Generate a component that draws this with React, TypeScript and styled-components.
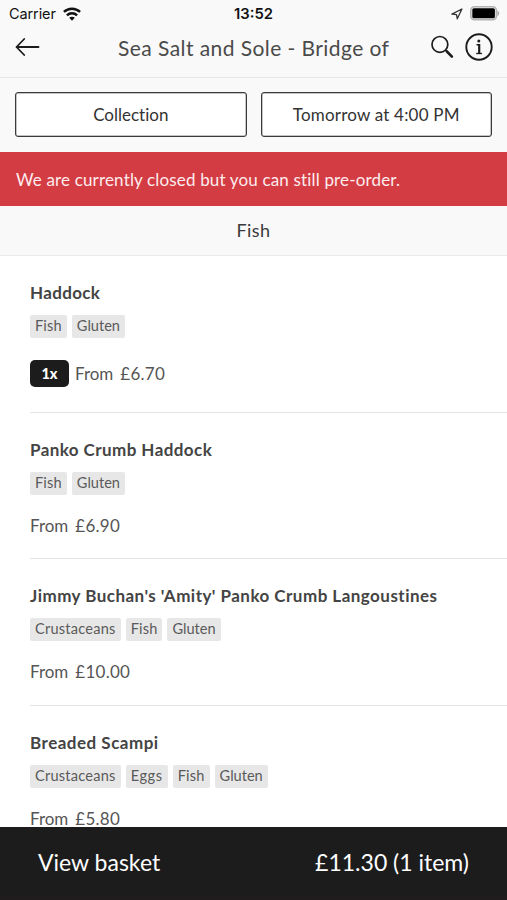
import React from "react";
import styled, { createGlobalStyle } from "styled-components";

const Global = createGlobalStyle`
  * { box-sizing: border-box; }
  body { margin: 0; background: #fff; }
`;

const Screen = styled.div`
  width: 100%;
  height: 900px;
  display: flex;
  flex-direction: column;
  overflow: hidden;
  background: #fff;
  color: #4a4a4a;
  font-family: Lato, "Open Sans", sans-serif;
`;

const Label = styled.span<{ $track?: number }>`
  letter-spacing: ${({ $track = 0 }) => $track}px;
  font-variant-ligatures: none;
  white-space: nowrap;
`;

const Header = styled.header`
  flex: none;
  height: 78px;
  background: #f9f9f9;
  border-bottom: 1px solid #e6e6e6;
`;

const StatusBar = styled.div`
  display: grid;
  grid-template-columns: 1fr auto 1fr;
  align-items: center;
  height: 27px;
  padding: 0 7px 0 9px;
  color: #111;
  font: 400 14.5px Inter, sans-serif;
`;

const StatusGroup = styled.div<{ $end?: boolean }>`
  display: flex;
  align-items: center;
  gap: 7px;
  justify-content: ${({ $end }) => ($end ? "flex-end" : "flex-start")};
`;

const Clock = styled.div`
  margin-right: 2px;
  font-weight: 600;
  font-size: 14.8px;
`;

const NavBar = styled.div`
  display: flex;
  align-items: center;
  height: 40px;
  padding: 0 14px 0 15px;
  color: #1c1c1c;
`;

const IconButton = styled.button`
  display: flex;
  flex: none;
  margin: 0;
  padding: 0;
  border: 0;
  background: none;
  color: inherit;
`;

const Title = styled.h1`
  flex: 1;
  margin: 1px 0 0 78px;
  color: #4a4a4a;
  font-size: 21px;
  font-weight: 400;
  line-height: 28px;
`;

const NavActions = styled.div`
  display: flex;
  align-items: center;
  gap: 11px;
`;

const Options = styled.div`
  flex: none;
  display: grid;
  grid-template-columns: 1fr 1fr;
  gap: 14px;
  height: 74px;
  padding: 14px 15px 15px;
  background: #f9f9f9;
`;

const OptionButton = styled.button`
  margin: 0;
  padding: 0;
  border: 1px solid #3a3a3a;
  border-radius: 3px;
  background: #fff;
  box-shadow: inset 0 0 0 0.5px #8a8a8a;
  color: #333;
  font-family: inherit;
  font-size: 17px;
  text-align: center;
`;

const Notice = styled.div`
  flex: none;
  height: 54px;
  padding: 0 16px;
  background: #d43c44;
  color: #fdeced;
  font-size: 17px;
  line-height: 55px;
`;

const SectionTitle = styled.h2`
  flex: none;
  height: 50px;
  margin: 0;
  border-bottom: 1px solid #e9e9e9;
  background: #f9f9f9;
  color: #3a3a3a;
  font-size: 18px;
  font-weight: 400;
  line-height: 49px;
  text-align: center;
`;

const Menu = styled.main`
  flex: 1;
  min-height: 0;
  overflow: hidden;
  padding-left: 30px;
`;

const Item = styled.article<{ $inBasket: boolean }>`
  height: ${({ $inBasket }) => ($inBasket ? 156.6 : 146.7)}px;
  padding-top: 25px;
  border-bottom: 1px solid #e4e4e4;
`;

const ItemName = styled.h3`
  margin: 0;
  color: #444;
  font-size: 17px;
  font-weight: 700;
  line-height: 24px;
`;

const Tags = styled.div`
  display: flex;
  gap: 5px;
  margin-top: 10px;
`;

const Tag = styled.span`
  height: 23px;
  padding: 0 5px;
  border-radius: 2px;
  background: #e7e7e7;
  color: #5a5a5a;
  font-size: 14.6px;
  line-height: 22px;
`;

const PriceRow = styled.div<{ $inBasket: boolean }>`
  display: flex;
  align-items: center;
  height: 27px;
  margin-top: ${({ $inBasket }) => ($inBasket ? 22 : 17)}px;
  color: #555;
  font-size: 17px;
`;

const Quantity = styled.span`
  width: 39px;
  height: 27px;
  margin-right: 6px;
  border-radius: 5px;
  background: #1c1c1c;
  color: #fff;
  font-size: 14.5px;
  font-weight: 900;
  line-height: 27px;
  text-align: center;
`;

const Amount = styled(Label)`
  margin-left: 7px;
`;

const BasketBar = styled.footer`
  flex: none;
  display: flex;
  align-items: center;
  justify-content: space-between;
  height: 73px;
  padding: 0 38px;
  border-bottom: 3px solid #201b1d;
  background: #1c1c1c;
  color: #fff;
  font-size: 23px;
`;

const WifiIcon = () => (
  <svg width="18" height="14" viewBox="0 0 18 14" fill="none" stroke="#111" strokeWidth="2.5">
    <path d="M.9 4.9C5.4.6 12.6.6 17.1 4.9" />
    <path d="M3.9 8.3c2.9-2.7 7.3-2.7 10.2 0" />
    <path d="M6.2 10.8c1.6-1.5 4-1.5 5.6 0L9 13.7z" fill="#111" stroke="none" />
  </svg>
);

const LocationIcon = () => (
  <svg width="12" height="12" viewBox="0 0 12 12" fill="none" stroke="#333" strokeWidth="1.3" strokeLinejoin="round">
    <path d="M10.9 1 .9 6.2l4.6.4.8 4.2z" />
  </svg>
);

const BatteryIcon = () => (
  <svg width="30" height="15" viewBox="0 0 30 15">
    <rect x=".8" y=".8" width="25.6" height="13" rx="3.5" fill="#f0f0f0" stroke="#b4b4b4" strokeWidth="1.6" />
    <rect x="2.3" y="2.3" width="22.6" height="10" rx="1.5" fill="#000" />
    <path d="M27.400 4.500c2.400 1 2.400 4.600 0 5.600z" fill="#aaa" />
  </svg>
);

const BackIcon = () => (
  <svg width="25" height="20" viewBox="0 0 25 20" fill="none" stroke="currentColor" strokeWidth="1.8" strokeLinecap="round" strokeLinejoin="round">
    <path d="M9.2 2 1.5 10l7.7 8M1.500 10h22" />
  </svg>
);

const SearchIcon = () => (
  <svg width="23" height="24" viewBox="0 0 23 24" fill="none" stroke="currentColor">
    <circle cx="8.900" cy="9.400" r="7.900" strokeWidth="1.700" />
    <path d="m14.600 15.200 1.500 1.500" strokeWidth="1.700" />
    <path d="m15.900 16.500 5 5.100" strokeWidth="2.600" strokeLinecap="round" />
  </svg>
);

const InfoIcon = () => (
  <svg width="28" height="28" viewBox="0 0 28 28" fill="none" stroke="currentColor">
    <circle cx="14" cy="14" r="12.700" strokeWidth="1.900" />
    <circle cx="13.800" cy="7.900" r="1.500" fill="currentColor" stroke="none" />
    <path d="M11.500 11.700h2.700" strokeWidth="1.500" />
    <path d="M14.200 11v9" strokeWidth="2.200" />
    <path d="M11.200 20.500h5.800" strokeWidth="1.300" />
  </svg>
);

type Dish = {
  name: string;
  track: number;
  allergens: string[];
  price: string;
  quantity?: number;
};

const dishes: Dish[] = [
  { name: "Haddock", track: 0.35, allergens: ["Fish", "Gluten"], price: "£6.70", quantity: 1 },
  { name: "Panko Crumb Haddock", track: 0.43, allergens: ["Fish", "Gluten"], price: "£6.90" },
  { name: "Jimmy Buchan's 'Amity' Panko Crumb Langoustines", track: 0.47, allergens: ["Crustaceans", "Fish", "Gluten"], price: "£10.00" },
  { name: "Breaded Scampi", track: 0.5, allergens: ["Crustaceans", "Eggs", "Fish", "Gluten"], price: "£5.80" },
];

const tagTracking: Record<string, number> = { Fish: 0.15, Gluten: 0, Crustaceans: 0.22, Eggs: 0.6 };

export default function App() {
  return (
    <Screen>
      <Global />
      <Header>
        <StatusBar>
          <StatusGroup><Label $track={-0.1}>Carrier</Label><WifiIcon /></StatusGroup>
          <Clock>13:52</Clock>
          <StatusGroup $end><LocationIcon /><BatteryIcon /></StatusGroup>
        </StatusBar>
        <NavBar>
          <IconButton aria-label="Back"><BackIcon /></IconButton>
          <Title><Label $track={0.43}>Sea Salt and Sole - Bridge of</Label></Title>
          <NavActions>
            <IconButton aria-label="Search"><SearchIcon /></IconButton>
            <IconButton aria-label="Information"><InfoIcon /></IconButton>
          </NavActions>
        </NavBar>
      </Header>
      <Options>
        <OptionButton><Label>Collection</Label></OptionButton>
        <OptionButton><Label $track={0.2}>Tomorrow at 4:00 PM</Label></OptionButton>
      </Options>
      <Notice><Label $track={0.16}>We are currently closed but you can still pre-order.</Label></Notice>
      <SectionTitle><Label $track={0.4}>Fish</Label></SectionTitle>
      <Menu>
        {dishes.map(({ name, track, allergens, price, quantity }) => (
          <Item key={name} $inBasket={!!quantity}>
            <ItemName><Label $track={track}>{name}</Label></ItemName>
            <Tags>
              {allergens.map((a) => (
                <Tag key={a}><Label $track={tagTracking[a]}>{a}</Label></Tag>
              ))}
            </Tags>
            <PriceRow $inBasket={!!quantity}>
              {quantity && <Quantity>{quantity}x</Quantity>}
              <Label>From</Label>
              <Amount $track={0.25}>{price}</Amount>
            </PriceRow>
          </Item>
        ))}
      </Menu>
      <BasketBar>
        <Label>View basket</Label>
        <Label>£11.30 (1 item)</Label>
      </BasketBar>
    </Screen>
  );
}
